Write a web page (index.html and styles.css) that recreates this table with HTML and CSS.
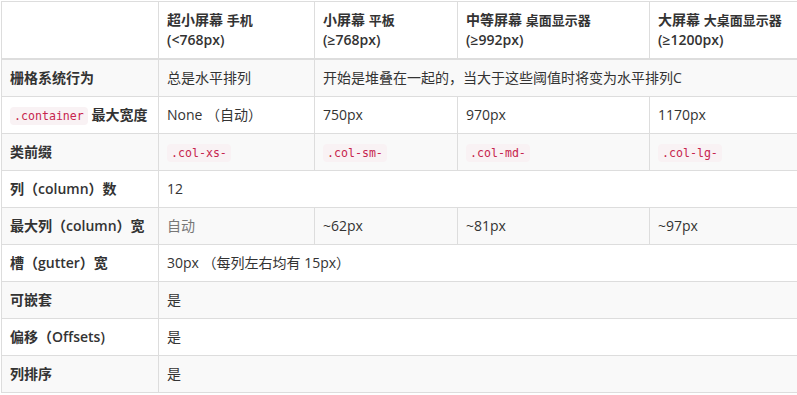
FILE: index.html
```html
<!DOCTYPE html>
<html lang="zh">
<head>
<meta charset="utf-8">
<link rel="stylesheet" href="styles.css">
</head>
<body>
<table class="grid-table">
  <colgroup>
    <col class="c1"><col class="c2"><col class="c3"><col class="c4"><col class="c5">
  </colgroup>
  <thead>
    <tr>
      <th></th>
      <th>超小屏幕 <span class="sub">手机</span><br>(&lt;768px)</th>
      <th>小屏幕 <span class="sub">平板</span><br>(≥768px)</th>
      <th>中等屏幕 <span class="sub">桌面显示器</span><br>(≥992px)</th>
      <th>大屏幕 <span class="sub">大桌面显示器</span><br>(≥1200px)</th>
    </tr>
  </thead>
  <tbody>
    <tr>
      <th>栅格系统行为</th>
      <td>总是水平排列</td>
      <td colspan="3">开始是堆叠在一起的，当大于这些阈值时将变为水平排列C</td>
    </tr>
    <tr>
      <th><code>.container</code> 最大宽度</th>
      <td>None （自动）</td>
      <td>750px</td>
      <td>970px</td>
      <td>1170px</td>
    </tr>
    <tr>
      <th>类前缀</th>
      <td><code>.col-xs-</code></td>
      <td><code>.col-sm-</code></td>
      <td><code>.col-md-</code></td>
      <td><code>.col-lg-</code></td>
    </tr>
    <tr>
      <th>列（column）数</th>
      <td colspan="4">12</td>
    </tr>
    <tr>
      <th>最大列（column）宽</th>
      <td class="muted">自动</td>
      <td>~62px</td>
      <td>~81px</td>
      <td>~97px</td>
    </tr>
    <tr>
      <th>槽（gutter）宽</th>
      <td colspan="4">30px （每列左右均有 15px）</td>
    </tr>
    <tr>
      <th>可嵌套</th>
      <td colspan="4">是</td>
    </tr>
    <tr>
      <th>偏移（Offsets)</th>
      <td colspan="4">是</td>
    </tr>
    <tr>
      <th>列排序</th>
      <td colspan="4">是</td>
    </tr>
  </tbody>
</table>
</body>
</html>
```

FILE: styles.css
```css
html, body {
  margin: 0;
  padding: 0;
  background: #fff;
}
body {
  padding: 1px 0 0 1px;
  font-family: "Open Sans", "Noto Sans CJK SC", sans-serif;
  font-size: 14px;
  line-height: 20px;
  color: #333;
}
.grid-table {
  border-collapse: collapse;
  border-spacing: 0;
  table-layout: fixed;
  width: 796px;
  border: 1px solid #ddd;
}
.c1 { width: 157px; }
.c2 { width: 156px; }
.c3 { width: 143px; }
.c4 { width: 192px; }
.c5 { width: 148px; }
.grid-table th,
.grid-table td {
  border: 1px solid #ddd;
  padding: 8px;
  text-align: left;
  vertical-align: top;
  white-space: nowrap;
}
.grid-table tbody th,
.grid-table tbody td {
  line-height: 18px;
  height: 20px;
  padding: 8px 8px 8px;
  box-sizing: content-box;
  vertical-align: middle;
}
.grid-table th {
  font-weight: 600;
}
.grid-table thead th {
  border-bottom: 2px solid #ddd;
  vertical-align: bottom;
  line-height: 20px;
  padding: 8px;
}
.grid-table td {
  font-weight: normal;
}
.sub {
  font-size: 13px;
}
.grid-table tbody tr:nth-child(odd) {
  background: #f9f9f9;
}
.muted {
  color: #777;
}
code {
  font-family: "DejaVu Sans Mono", "Liberation Mono", monospace;
  font-size: 11.6px;
  line-height: 14px;
  font-weight: normal;
  color: #c7254e;
  background: #f9f2f4;
  padding: 2px 4px;
  border-radius: 4px;
}
```
